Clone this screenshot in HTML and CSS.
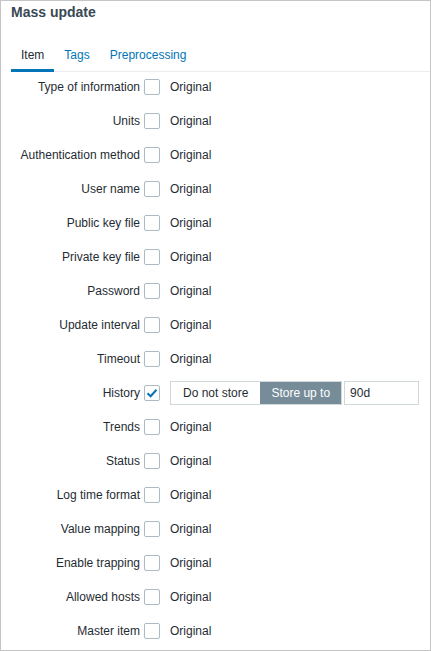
FILE: index.html
```html
<!DOCTYPE html>
<html>
<head>
<meta charset="utf-8">
<link rel="stylesheet" href="styles.css">
</head>
<body>
<div class="dialog">
  <div class="title">Mass update</div>
  <div class="tabs">
    <span class="tab active">Item</span>
    <span class="tab">Tags</span>
    <span class="tab">Preprocessing</span>
  </div>
  <div class="form">
    <div class="row"><span class="label">Type of information</span><span class="cb"></span><span class="val">Original</span></div>
    <div class="row"><span class="label">Units</span><span class="cb"></span><span class="val">Original</span></div>
    <div class="row"><span class="label">Authentication method</span><span class="cb"></span><span class="val">Original</span></div>
    <div class="row"><span class="label">User name</span><span class="cb"></span><span class="val">Original</span></div>
    <div class="row"><span class="label">Public key file</span><span class="cb"></span><span class="val">Original</span></div>
    <div class="row"><span class="label">Private key file</span><span class="cb"></span><span class="val">Original</span></div>
    <div class="row"><span class="label">Password</span><span class="cb"></span><span class="val">Original</span></div>
    <div class="row"><span class="label">Update interval</span><span class="cb"></span><span class="val">Original</span></div>
    <div class="row"><span class="label">Timeout</span><span class="cb"></span><span class="val">Original</span></div>
    <div class="row"><span class="label">History</span><span class="cb checked"><svg width="14" height="14" viewBox="0 0 14 14"><path d="M2.5 7.2 L5.6 10.2 L11.5 3.8" fill="none" stroke="#0275b8" stroke-width="2"/></svg></span>
      <span class="val history">
        <span class="radios"><span class="opt">Do not store</span><span class="opt on">Store up to</span></span>
        <span class="input">90d</span>
      </span>
    </div>
    <div class="row"><span class="label">Trends</span><span class="cb"></span><span class="val">Original</span></div>
    <div class="row"><span class="label">Status</span><span class="cb"></span><span class="val">Original</span></div>
    <div class="row"><span class="label">Log time format</span><span class="cb"></span><span class="val">Original</span></div>
    <div class="row"><span class="label">Value mapping</span><span class="cb"></span><span class="val">Original</span></div>
    <div class="row"><span class="label">Enable trapping</span><span class="cb"></span><span class="val">Original</span></div>
    <div class="row"><span class="label">Allowed hosts</span><span class="cb"></span><span class="val">Original</span></div>
    <div class="row"><span class="label">Master item</span><span class="cb"></span><span class="val">Original</span></div>
  </div>
</div>
</body>
</html>
```
FILE: styles.css
```css
html, body {
  margin: 0;
  padding: 0;
  background: #fff;
}
body {
  font-family: "Liberation Sans", Arial, sans-serif;
  font-size: 12px;
  color: #1f2c33;
}
.dialog {
  box-sizing: border-box;
  width: 431px;
  height: 651px;
  border: 1px solid #c5c5c5;
  background: #fff;
  overflow: hidden;
}
.title {
  padding: 2px 10px 0;
  height: 18px;
  line-height: 18px;
  font-size: 14px;
  font-weight: bold;
  color: #384854;
}
.tabs {
  margin: 17px 0 0 10px;
  display: flex;
  border-bottom: 1px solid #ebeef0;
}
.tab {
  padding: 10px 10px 7px;
  line-height: 14px;
  color: #0275b8;
  border-bottom: 3px solid transparent;
  margin-bottom: -1px;
}
.tab.active {
  color: #1f2c33;
  border-bottom-color: #0275b8;
}
.form {
  padding-top: 3px;
  display: flex;
  flex-direction: column;
  gap: 10px;
}
.row {
  display: grid;
  grid-template-columns: 139px 16px 1fr;
  column-gap: 4px;
  align-items: center;
  height: 24px;
}
.label {
  text-align: right;
  white-space: nowrap;
}
.cb {
  box-sizing: border-box;
  width: 16px;
  height: 16px;
  border: 1px solid #acbbc2;
  border-radius: 2px;
  background: #fff;
  display: flex;
  align-items: center;
  justify-content: center;
}
.val {
  margin-left: 6px;
}
.history {
  display: flex;
  align-items: center;
  gap: 2px;
}
.radios {
  display: flex;
  height: 24px;
  box-sizing: border-box;
  border: 1px solid #d1d8dc;
}
.opt {
  display: flex;
  align-items: center;
  padding: 0 12px;
}
.opt.on {
  background: #768d99;
  color: #fff;
  padding: 0 11px;
}
.input {
  box-sizing: border-box;
  width: 75px;
  height: 24px;
  border: 1px solid #d1d8dc;
  padding: 0 5px;
  display: flex;
  align-items: center;
}
```
